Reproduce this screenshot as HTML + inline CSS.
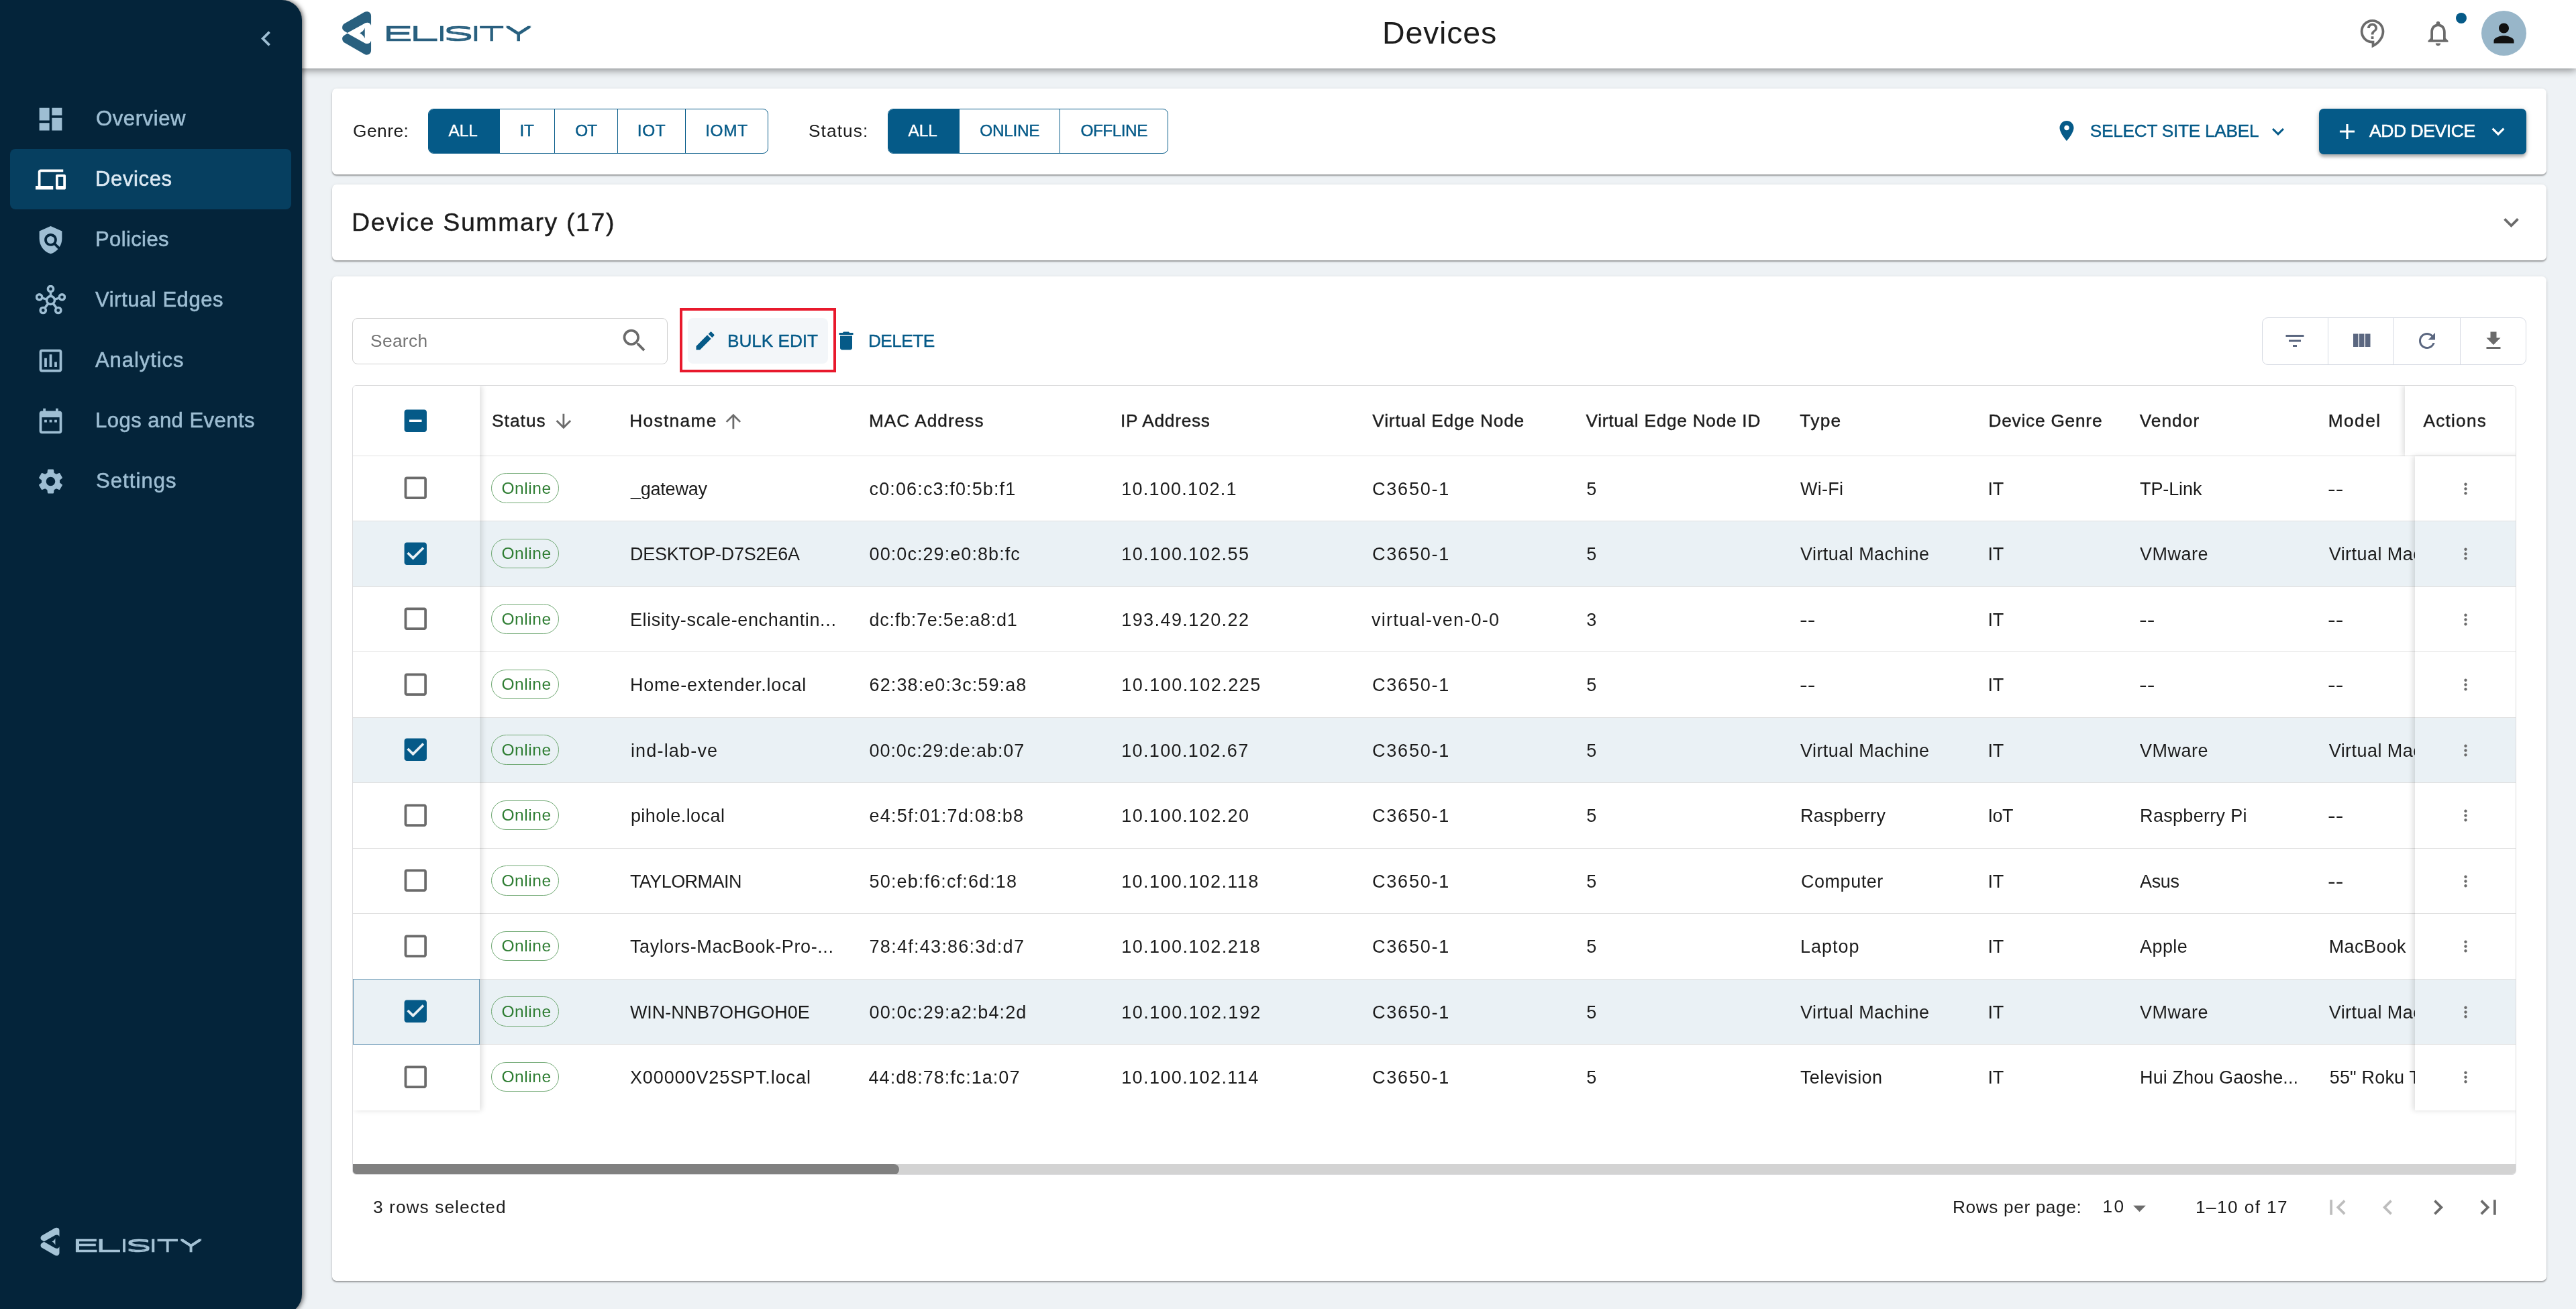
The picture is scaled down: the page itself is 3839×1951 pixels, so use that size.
<!DOCTYPE html>
<html lang="en"><head><meta charset="utf-8"><title>Devices</title>
<style>
*{box-sizing:border-box;margin:0;padding:0}
html,body{width:3839px;height:1951px;overflow:hidden}
body{will-change:transform;background:#eef2f5;font-family:"Liberation Sans",sans-serif;color:#1c1c1c;position:relative}
.ic{position:absolute;display:block}
.abs{position:absolute}
.t{position:absolute;white-space:nowrap;line-height:1}
.m{-webkit-text-stroke:0.42px currentColor}
.m2{-webkit-text-stroke:0.55px currentColor}
#hdr{position:absolute;left:0;top:0;width:3839px;height:102px;background:#fff;box-shadow:0 3px 11px rgba(0,0,0,.42)}
#side{position:absolute;left:0;top:0;width:450px;height:1959px;background:#04243a;border-radius:0 30px 30px 0;box-shadow:2px 0 7px rgba(0,0,0,.6)}
.nav{position:absolute;left:15px;width:419px;height:90px;border-radius:8px}
.nav.act{background:#063f60}
.card{position:absolute;left:495px;width:3300px;background:#fff;border-radius:6.5px;box-shadow:0 2px 2px rgba(0,0,0,.32),0 1px 5px rgba(0,0,0,.10)}
.tg{position:absolute;top:30px;height:67px;border:1.5px solid #055a88;border-radius:8px;overflow:hidden}
.tg>div{position:absolute;top:-1.5px;height:67px;display:flex;align-items:center;justify-content:center;font-size:26.25px;color:#055a88;border-left:1.5px solid #055a88;letter-spacing:.1px}
.tg>div:first-child{border-left:0;background:#055a88;color:#fff}
.lbl{font-size:26.25px;color:#1c1c1c}
.btn{font-size:26.25px;color:#055a88;letter-spacing:.4px}
#grid{position:absolute;left:30px;top:162px;width:3225px;height:1177px;border:1px solid #dadadc;border-radius:6px;overflow:hidden}
.row{position:absolute;left:0;width:3225px;height:97.5px;border-bottom:1px solid #e0e0e0}
.row.sel{background:#eaf1f5}
.c{position:absolute;top:0;height:96px;display:flex;align-items:center;font-size:27px;color:#1c1c1c;white-space:nowrap;letter-spacing:1px;overflow:hidden}
.h{position:absolute;top:0;height:104px;display:flex;align-items:center;font-size:26.25px;color:#1c1c1c;white-space:nowrap;letter-spacing:.8px}
.chip{position:absolute;width:101px;height:44.5px;border:1.5px solid #6fa872;border-radius:23px}
.pinL{position:absolute;left:0;top:0;width:189px;background:#fff;box-shadow:3px 0 8px rgba(0,0,0,.13)}
.pinR{position:absolute;top:0;background:#fff;box-shadow:-3px 0 8px rgba(0,0,0,.13)}
.pc{position:absolute;left:0;width:100%;height:97.5px;border-bottom:1px solid #e0e0e0}
.pc.sel{background:#eaf1f5}
</style></head><body>

<div id="hdr">
<svg class="ic" style="left:500px;top:10px;width:70.0px;height:80.0px" viewBox="0 0 1145 1309" fill="#29607f"><path d="M215 415L705 132C735 115 790 108 830 140C860 165 868 195 868 230L868 460C850 410 810 385 770 390C740 392 720 400 700 412L290 640L225 600C180 575 160 540 165 500C170 455 190 430 215 415Z"/><path d="M215 875 L705 1158 C735 1175 790 1182 830 1150 C860 1125 868 1095 868 1060 L868 830 C850 880 810 905 770 900 C740 898 720 890 700 878 L290 650 L225 690 C180 715 160 750 165 790 C170 835 190 860 215 875 Z"/><path d="M590 645C640 620 690 580 715 515L715 775C690 710 640 670 590 645Z"/></svg>
<svg class="ic" style="left:570px;top:30px;width:230px;height:40px" viewBox="0 0 230 40"><defs><filter id="vd1" x="-2%" y="-30%" width="104%" height="160%"><feMorphology operator="dilate" radius="0 1"/></filter></defs><g font-family="DejaVu Sans, Liberation Sans, sans-serif" font-weight="200" font-size="27" fill="#29607f" stroke="#29607f" stroke-width="0.6" filter="url(#vd1)"><text transform="translate(-3.10,29.700000000000003) scale(3.014,1)">E</text><text transform="translate(36.93,29.700000000000003) scale(3.073,1)">L</text><text transform="translate(79.00,29.700000000000003) scale(2.370,1)">I</text><text transform="translate(89.58,29.700000000000003) scale(2.806,1)">S</text><text transform="translate(129.68,29.700000000000003) scale(2.311,1)">I</text><text transform="translate(144.47,29.700000000000003) scale(2.204,1)">T</text><text transform="translate(183.62,29.700000000000003) scale(2.332,1)">Y</text></g></svg>
<div class="t" style="left:2060.00px;top:26px;font-size:46.5px;letter-spacing:0.811px;color:#1c1c1c;">Devices</div>
<svg class="ic" style="left:3514.0px;top:27.0px;width:45px;height:45px" viewBox="0 0 24 24" fill="#6b6b6b"><path d="M11 23.590v-3.600c-5.010-.260-9-4.420-9-9.490C2 5.260 6.260 1 11.500 1S21 5.260 21 10.500c0 4.950-3.440 9.930-8.570 12.400l-1.430.690zM11.500 3C7.360 3 4 6.360 4 10.500S7.360 18 11.500 18H13v2.300c3.640-2.300 6-6.080 6-9.800C19 6.360 15.640 3 11.500 3zm-1 11.500h2v2h-2zm2-1.500h-2c0-3.250 3-3 3-5 0-1.100-.900-2-2-2s-2 .900-2 2h-2c0-2.210 1.790-4 4-4s4 1.790 4 4c0 2.500-3 2.750-3 5z"/></svg>
<svg class="ic" style="left:3611.2px;top:27.0px;width:45px;height:45px" viewBox="0 0 24 24" fill="#6b6b6b"><path d="M12 22c1.1 0 2-.9 2-2h-4c0 1.1.9 2 2 2zm6-6v-5c0-3.070-1.630-5.640-4.500-6.320V4c0-.830-.670-1.500-1.500-1.500s-1.500.670-1.500 1.500v.680C7.640 5.360 6 7.920 6 11v5l-2 2v1h16v-1l-2-2zm-2 1H8v-6c0-2.480 1.510-4.500 4-4.500s4 2.020 4 4.500v6z"/></svg>
<div class="abs" style="left:3660px;top:19px;width:16px;height:16px;border-radius:50%;background:#055a88"></div>
<div class="abs" style="left:3698px;top:16px;width:67px;height:67px;border-radius:50%;background:#98b6c9"></div>
<svg class="ic" style="left:3709.0px;top:27.0px;width:45px;height:45px" viewBox="0 0 24 24" fill="#111"><path d="M12 12c2.210 0 4-1.790 4-4s-1.790-4-4-4-4 1.790-4 4 1.790 4 4 4zm0 2c-2.670 0-8 1.340-8 4v2h16v-2c0-2.660-5.330-4-8-4z"/></svg>
</div>
<div id="side">
<svg class="ic" style="left:373.5px;top:34.5px;width:45px;height:45px" viewBox="0 0 24 24" fill="#9ebed3"><path d="M15.41 7.41L14 6l-6 6 6 6 1.41-1.41L10.83 12z"/></svg>
<div class="nav" style="top:132px">
<svg class="ic" style="left:37.5px;top:22.5px;width:45px;height:45px" viewBox="0 0 24 24" fill="#9ebed3"><path d="M3 13h8V3H3v10zm0 8h8v-6H3v6zm10 0h8V11h-8v10zm0-18v6h8V3h-8z"/></svg>
<div class="t m2" style="left:128.00px;top:29.3px;font-size:31px;letter-spacing:0.599px;color:#9ebed3;">Overview</div>
</div>
<div class="nav act" style="top:222px">
<svg class="ic" style="left:37.5px;top:22.5px;width:45px;height:45px" viewBox="0 0 24 24" fill="#ffffff"><path d="M4 6h18V4H4c-1.1 0-2 .9-2 2v11H0v3h14v-3H4V6zm19 2h-6c-.55 0-1 .45-1 1v10c0 .55.45 1 1 1h6c.55 0 1-.45 1-1V9c0-.55-.45-1-1-1zm-1 9h-4v-7h4v7z"/></svg>
<div class="t m2" style="left:127.00px;top:29.3px;font-size:31px;letter-spacing:0.624px;color:#dbe9f3;">Devices</div>
</div>
<div class="nav" style="top:312px">
<svg class="ic" style="left:37.5px;top:22.5px;width:45px;height:45px" viewBox="0 0 24 24" fill="#9ebed3"><path d="M21 5l-9-4-9 4v6c0 5.55 3.84 10.74 9 12 2.3-.56 4.33-1.9 5.88-3.71l-3.12-3.12c-1.94 1.29-4.58 1.07-6.29-.64-1.95-1.95-1.95-5.12 0-7.07 1.95-1.95 5.12-1.95 7.07 0 1.71 1.71 1.92 4.35.64 6.29l2.9 2.9C20.29 15.69 21 13.38 21 11V5z"/><circle cx="12" cy="12" r="3"/></svg>
<div class="t m2" style="left:127.00px;top:29.3px;font-size:31px;letter-spacing:0.383px;color:#9ebed3;">Policies</div>
</div>
<div class="nav" style="top:402px">
<svg class="ic" style="left:37.5px;top:22.5px;width:45px;height:45px" viewBox="0 0 24 24" fill="none" stroke="#9ebed3" stroke-width="1.85"><circle cx="12" cy="12" r="3.2"/><circle cx="12" cy="3" r="2.2"/><circle cx="3" cy="9.5" r="2.2"/><circle cx="21" cy="9.5" r="2.2"/><circle cx="6" cy="20" r="2.2"/><circle cx="18" cy="20" r="2.2"/><path d="M12 5.2V8.8M5.1 10.2L8.9 11.3M18.9 10.2L15.1 11.3M7.3 18.2L10 14.6M16.7 18.2L14 14.6"/></svg>
<div class="t m2" style="left:127.00px;top:29.3px;font-size:31px;letter-spacing:0.557px;color:#9ebed3;">Virtual Edges</div>
</div>
<div class="nav" style="top:492px">
<svg class="ic" style="left:37.5px;top:22.5px;width:45px;height:45px" viewBox="0 0 24 24" fill="#9ebed3"><path d="M19 3H5c-1.1 0-2 .9-2 2v14c0 1.1.9 2 2 2h14c1.1 0 2-.9 2-2V5c0-1.1-.9-2-2-2zm0 16H5V5h14v14zM7 10h2v7H7zm4-3h2v10h-2zm4 6h2v4h-2z"/></svg>
<div class="t m2" style="left:127.00px;top:29.3px;font-size:31px;letter-spacing:0.932px;color:#9ebed3;">Analytics</div>
</div>
<div class="nav" style="top:582px">
<svg class="ic" style="left:37.5px;top:22.5px;width:45px;height:45px" viewBox="0 0 24 24" fill="#9ebed3"><path d="M9 11H7v2h2v-2zm4 0h-2v2h2v-2zm4 0h-2v2h2v-2zm2-7h-1V2h-2v2H8V2H6v2H5c-1.11 0-1.99.9-1.99 2L3 20c0 1.1.89 2 2 2h14c1.1 0 2-.9 2-2V6c0-1.1-.9-2-2-2zm0 16H5V9h14v11z"/></svg>
<div class="t m2" style="left:127.00px;top:29.3px;font-size:31px;letter-spacing:0.469px;color:#9ebed3;">Logs and Events</div>
</div>
<div class="nav" style="top:672px">
<svg class="ic" style="left:37.5px;top:22.5px;width:45px;height:45px" viewBox="0 0 24 24" fill="#9ebed3"><path d="M19.14 12.94c.04-.3.06-.61.06-.94 0-.32-.02-.64-.07-.94l2.03-1.58c.18-.14.23-.41.12-.61l-1.92-3.32c-.12-.22-.37-.29-.59-.22l-2.39.96c-.5-.38-1.03-.7-1.62-.94l-.36-2.54c-.04-.24-.24-.41-.48-.41h-3.84c-.24 0-.43.17-.47.41l-.36 2.54c-.59.24-1.13.57-1.62.94l-2.39-.96c-.22-.08-.47 0-.59.22L2.74 8.87c-.12.21-.08.47.12.61l2.03 1.58c-.05.3-.09.63-.09.94s.02.64.07.94l-2.03 1.58c-.18.14-.23.41-.12.61l1.92 3.32c.12.22.37.29.59.22l2.39-.96c.5.38 1.03.7 1.62.94l.36 2.54c.05.24.24.41.48.41h3.84c.24 0 .44-.17.47-.41l.36-2.54c.59-.24 1.13-.56 1.62-.94l2.39.96c.22.08.47 0 .59-.22l1.92-3.32c.12-.22.07-.47-.12-.61l-2.01-1.58zM12 15.6c-1.98 0-3.6-1.62-3.6-3.6s1.62-3.6 3.6-3.6 3.6 1.62 3.6 3.6-1.62 3.6-3.6 3.6z"/></svg>
<div class="t m2" style="left:128.00px;top:29.3px;font-size:31px;letter-spacing:1.070px;color:#9ebed3;">Settings</div>
</div>
<svg class="ic" style="left:53.5px;top:1824.5px;width:45.5px;height:52.0px" viewBox="0 0 1145 1309" fill="#a5c3d6"><path d="M215 415L705 132C735 115 790 108 830 140C860 165 868 195 868 230L868 460C850 410 810 385 770 390C740 392 720 400 700 412L290 640L225 600C180 575 160 540 165 500C170 455 190 430 215 415Z"/><path d="M215 875 L705 1158 C735 1175 790 1182 830 1150 C860 1125 868 1095 868 1060 L868 830 C850 880 810 905 770 900 C740 898 720 890 700 878 L290 650 L225 690 C180 715 160 750 165 790 C170 835 190 860 215 875 Z"/><path d="M590 645C640 620 690 580 715 515L715 775C690 710 640 670 590 645Z"/></svg>
<svg class="ic" style="left:105px;top:1836px;width:210px;height:40px" viewBox="0 0 210 40"><defs><filter id="vd2" x="-2%" y="-30%" width="104%" height="160%"><feMorphology operator="dilate" radius="0 1"/></filter></defs><g font-family="DejaVu Sans, Liberation Sans, sans-serif" font-weight="200" font-size="22.9" fill="#a5c3d6" stroke="#a5c3d6" stroke-width="0.5" filter="url(#vd2)"><text transform="translate(0.10,28.700000000000045) scale(3.114,1)">E</text><text transform="translate(34.46,28.700000000000045) scale(3.209,1)">L</text><text transform="translate(72.77,28.700000000000045) scale(2.166,1)">I</text><text transform="translate(81.40,28.700000000000045) scale(2.795,1)">S</text><text transform="translate(115.35,28.700000000000045) scale(2.376,1)">I</text><text transform="translate(128.99,28.700000000000045) scale(2.251,1)">T</text><text transform="translate(163.26,28.700000000000045) scale(2.334,1)">Y</text></g></svg>
</div>
<div class="card" style="top:132px;height:127.5px">
<div class="t" style="left:31.00px;top:50px;font-size:26.25px;letter-spacing:0.509px;color:#1c1c1c;">Genre:</div>
<div class="tg" style="left:143px;width:506.5px"><div style="left:-1.5px;width:106.79999999999995px"><div class="t m" style="left:31.05px;top:0.7px;font-size:24.4px;letter-spacing:-0.067px;color:#fff;line-height:66px;">ALL</div></div><div style="left:105.29999999999995px;width:81.5px"><div class="t m" style="left:29.25px;top:0.7px;font-size:24.4px;letter-spacing:-0.277px;color:#055a88;line-height:66px;">IT</div></div><div style="left:186.79999999999995px;width:94.40000000000009px"><div class="t m" style="left:30.55px;top:0.7px;font-size:24.4px;letter-spacing:-1.172px;color:#055a88;line-height:66px;">OT</div></div><div style="left:281.20000000000005px;width:100.69999999999993px"><div class="t m" style="left:28.60px;top:0.7px;font-size:24.4px;letter-spacing:0.626px;color:#055a88;line-height:66px;">IOT</div></div><div style="left:381.9px;width:123.10000000000002px"><div class="t m" style="left:29.30px;top:0.7px;font-size:24.4px;letter-spacing:0.645px;color:#055a88;line-height:66px;">IOMT</div></div></div>
<div class="t" style="left:710.00px;top:50px;font-size:26.25px;letter-spacing:1.097px;color:#1c1c1c;">Status:</div>
<div class="tg" style="left:828px;width:417.70000000000005px"><div style="left:-1.5px;width:106.70000000000005px"><div class="t m" style="left:31.00px;top:0.7px;font-size:24.4px;letter-spacing:-0.067px;color:#fff;line-height:66px;">ALL</div></div><div style="left:105.20000000000005px;width:149.70000000000005px"><div class="t m" style="left:30.10px;top:0.7px;font-size:24.4px;letter-spacing:-0.308px;color:#055a88;line-height:66px;">ONLINE</div></div><div style="left:254.9000000000001px;width:161.29999999999995px"><div class="t m" style="left:30.50px;top:0.7px;font-size:24.4px;letter-spacing:-0.487px;color:#055a88;line-height:66px;">OFFLINE</div></div></div>
<svg class="ic" style="left:2566.5px;top:45.0px;width:36px;height:36px" viewBox="0 0 24 24" fill="#055a88"><path d="M12 2C8.13 2 5 5.13 5 9c0 5.25 7 13 7 13s7-7.75 7-13c0-3.870-3.130-7-7-7zm0 9.500c-1.380 0-2.500-1.120-2.500-2.500s1.120-2.500 2.500-2.500 2.500 1.120 2.500 2.500-1.120 2.500-2.500 2.500z"/></svg>
<div class="t m" style="left:2619.70px;top:50px;font-size:26.25px;letter-spacing:-0.273px;color:#055a88;">SELECT SITE LABEL</div>
<svg class="ic" style="left:2881.5px;top:46.0px;width:36px;height:36px" viewBox="0 0 24 24" fill="#055a88"><path d="M16.59 8.59L12 13.17 7.41 8.59 6 10l6 6 6-6z"/></svg>
<div class="abs" style="left:2960.7px;top:30px;width:309.3px;height:67.5px;border-radius:7px;background:#055a88;box-shadow:0 4px 4px rgba(0,0,0,.25),0 1px 8px rgba(0,0,0,.14)"></div>
<svg class="ic" style="left:2983.5px;top:44.5px;width:38px;height:38px" viewBox="0 0 24 24" fill="#fff"><path d="M19 13h-6v6h-2v-6H5v-2h6V5h2v6h6v2z"/></svg>
<div class="t m2" style="left:3036.00px;top:50px;font-size:26.5px;letter-spacing:-0.422px;color:#fff;">ADD DEVICE</div>
<svg class="ic" style="left:3209.0px;top:45.0px;width:38px;height:38px" viewBox="0 0 24 24" fill="#fff"><path d="M16.59 8.59L12 13.17 7.41 8.59 6 10l6 6 6-6z"/></svg>
</div>
<div class="card" style="top:275px;height:113px">
<div class="t m" style="left:29.00px;top:38px;font-size:37.5px;letter-spacing:1.606px;color:#1c1c1c;">Device Summary (17)</div>
<svg class="ic" style="left:3224.5px;top:34.0px;width:45px;height:45px" viewBox="0 0 24 24" fill="#6b6b6b"><path d="M16.59 8.59L12 13.17 7.41 8.59 6 10l6 6 6-6z"/></svg>
</div>
<div class="card" style="top:412px;height:1497px">
<div class="abs" style="left:30px;top:62px;width:470px;height:68.5px;border:1.5px solid #cfcfcf;border-radius:8px"></div>
<div class="t" style="left:57.00px;top:83px;font-size:26.25px;letter-spacing:0.385px;color:#757575;">Search</div>
<svg class="ic" style="left:427.5px;top:72.5px;width:45px;height:45px" viewBox="0 0 24 24" fill="#6b6b6b"><path d="M15.5 14h-.79l-.28-.27C15.41 12.59 16 11.11 16 9.5 16 5.91 13.09 3 9.5 3S3 5.91 3 9.5 5.91 16 9.5 16c1.61 0 3.09-.59 4.23-1.57l.27.28v.79l5 4.99L20.49 19l-4.99-5zm-6 0C7.01 14 5 11.99 5 9.5S7.01 5 9.5 5 14 7.01 14 9.5 11.99 14 9.5 14z"/></svg>
<div class="abs" style="left:518px;top:47px;width:233px;height:96px;border:4.5px solid #e8192c"></div>
<div class="abs" style="left:530px;top:62px;width:209px;height:67.5px;border-radius:8px;background:#f3f6f9"></div>
<svg class="ic" style="left:537.5px;top:78.0px;width:36px;height:36px" viewBox="0 0 24 24" fill="#055a88"><path d="M3 17.25V21h3.75L17.81 9.94l-3.75-3.75L3 17.25zM20.71 7.04c.39-.39.39-1.02 0-1.41l-2.34-2.34c-.39-.39-1.02-.39-1.41 0l-1.83 1.83 3.75 3.75 1.83-1.83z"/></svg>
<div class="t m" style="left:589.00px;top:83px;font-size:26.25px;letter-spacing:-0.078px;color:#055a88;">BULK EDIT</div>
<svg class="ic" style="left:748.0px;top:78.0px;width:36px;height:36px" viewBox="0 0 24 24" fill="#055a88"><path d="M6 19c0 1.1.9 2 2 2h8c1.1 0 2-.9 2-2V7H6v12zM19 4h-3.5l-1-1h-5l-1 1H5v2h14V4z"/></svg>
<div class="t m" style="left:799.00px;top:83px;font-size:26.25px;letter-spacing:-0.582px;color:#055a88;">DELETE</div>
<div class="abs" style="left:2875.5px;top:60.5px;width:394.5px;height:71px;border:1.5px solid #d5d9e2;border-radius:9px"></div>
<div class="abs" style="left:2973.75px;top:60.5px;width:1.5px;height:71px;background:#d5d9e2"></div>
<div class="abs" style="left:3071.75px;top:60.5px;width:1.5px;height:71px;background:#d5d9e2"></div>
<div class="abs" style="left:3170.75px;top:60.5px;width:1.5px;height:71px;background:#d5d9e2"></div>
<svg class="ic" style="left:2907.0px;top:78.0px;width:36px;height:36px" viewBox="0 0 24 24" fill="#5b6780"><path d="M10 18h4v-2h-4v2zM3 6v2h18V6H3zm3 7h12v-2H6v2z"/></svg>
<svg class="ic" style="left:3005.5px;top:78.0px;width:36px;height:36px" viewBox="0 0 24 24" fill="#5b6780"><path d="M10 18h5V5h-5v13zm-6 0h5V5H4v13zM16 5v13h5V5h-5z"/></svg>
<svg class="ic" style="left:3104.0px;top:78.0px;width:36px;height:36px" viewBox="0 0 24 24" fill="#5b6780"><path d="M17.65 6.35C16.2 4.9 14.21 4 12 4c-4.42 0-7.99 3.58-7.99 8s3.57 8 7.99 8c3.73 0 6.84-2.55 7.73-6h-2.08c-.82 2.33-3.04 4-5.65 4-3.31 0-6-2.69-6-6s2.69-6 6-6c1.66 0 3.14.69 4.22 1.78L13 11h7V4l-2.35 2.35z"/></svg>
<svg class="ic" style="left:3202.5px;top:78.0px;width:36px;height:36px" viewBox="0 0 24 24" fill="#6b6b6b"><path d="M19 9h-4V3H9v6H5l7 7 7-7zM5 18v2h14v-2H5z"/></svg>
<div id="grid">
<div class="row" style="top:0;height:105px">
<div class="t m" style="left:207.00px;top:0px;font-size:26.25px;letter-spacing:1.061px;color:#1c1c1c;line-height:105px;">Status</div>
<div class="t m" style="left:412.20px;top:0px;font-size:26.25px;letter-spacing:1.352px;color:#1c1c1c;line-height:105px;">Hostname</div>
<div class="t m" style="left:768.90px;top:0px;font-size:26.25px;letter-spacing:1.020px;color:#1c1c1c;line-height:105px;">MAC Address</div>
<div class="t m" style="left:1143.90px;top:0px;font-size:26.25px;letter-spacing:0.737px;color:#1c1c1c;line-height:105px;">IP Address</div>
<div class="t m" style="left:1519.30px;top:0px;font-size:26.25px;letter-spacing:0.833px;color:#1c1c1c;line-height:105px;">Virtual Edge Node</div>
<div class="t m" style="left:1837.40px;top:0px;font-size:26.25px;letter-spacing:0.728px;color:#1c1c1c;line-height:105px;">Virtual Edge Node ID</div>
<div class="t m" style="left:2156.30px;top:0px;font-size:26.25px;letter-spacing:1.330px;color:#1c1c1c;line-height:105px;">Type</div>
<div class="t m" style="left:2437.40px;top:0px;font-size:26.25px;letter-spacing:0.783px;color:#1c1c1c;line-height:105px;">Device Genre</div>
<div class="t m" style="left:2662.70px;top:0px;font-size:26.25px;letter-spacing:1.049px;color:#1c1c1c;line-height:105px;">Vendor</div>
<div class="t m" style="left:2943.70px;top:0px;font-size:26.25px;letter-spacing:1.459px;color:#1c1c1c;line-height:105px;">Model</div>
</div>
<svg class="ic" style="left:296.6px;top:35.6px;width:33.75px;height:33.75px" viewBox="0 0 24 24" fill="#6b6b6b"><path d="M20 12l-1.41-1.41L13 16.17V4h-2v12.17l-5.58-5.59L4 12l8 8 8-8z"/></svg>
<svg class="ic" style="left:550.1px;top:35.6px;width:33.75px;height:33.75px" viewBox="0 0 24 24" fill="#6b6b6b"><path d="M4 12l1.41 1.41L11 7.83V20h2V7.83l5.58 5.59L20 12l-8-8-8 8z"/></svg>
<div class="row" style="top:105px;height:97px">
<div class="chip" style="left:206.39999999999998px;top:25.25px"><div class="t" style="left:14.00px;top:0.5px;font-size:24.5px;letter-spacing:0.561px;color:#2e7d32;line-height:42px;">Online</div></div>
<div class="t" style="left:413.90px;top:1px;font-size:27px;letter-spacing:-0.212px;color:#1c1c1c;line-height:97.5px;">_gateway</div>
<div class="t" style="left:769.60px;top:1px;font-size:27px;letter-spacing:1.124px;color:#1c1c1c;line-height:97.5px;">c0:06:c3:f0:5b:f1</div>
<div class="t" style="left:1145.20px;top:1px;font-size:27px;letter-spacing:1.252px;color:#1c1c1c;line-height:97.5px;">10.100.102.1</div>
<div class="t" style="left:1519.00px;top:1px;font-size:27px;letter-spacing:1.791px;color:#1c1c1c;line-height:97.5px;">C3650-1</div>
<div class="t" style="left:1838.30px;top:1px;font-size:27px;letter-spacing:0.000px;color:#1c1c1c;line-height:97.5px;">5</div>
<div class="t" style="left:2157.00px;top:1px;font-size:27px;letter-spacing:0.233px;color:#1c1c1c;line-height:97.5px;">Wi-Fi</div>
<div class="t" style="left:2436.40px;top:1px;font-size:27px;letter-spacing:-0.201px;color:#1c1c1c;line-height:97.5px;">IT</div>
<div class="t" style="left:2663.10px;top:1px;font-size:27px;letter-spacing:-0.121px;color:#1c1c1c;line-height:97.5px;">TP-Link</div>
<div class="t" style="left:2943.40px;top:1px;font-size:27px;letter-spacing:0.000px;color:#1c1c1c;line-height:97.5px;transform:scaleX(1.3);transform-origin:left;">--</div>
</div>
<div class="row sel" style="top:202px;height:98px">
<div class="chip" style="left:206.39999999999998px;top:25.75px"><div class="t" style="left:14.00px;top:0.5px;font-size:24.5px;letter-spacing:0.561px;color:#2e7d32;line-height:42px;">Online</div></div>
<div class="t" style="left:412.90px;top:1px;font-size:27px;letter-spacing:-0.214px;color:#1c1c1c;line-height:97.5px;">DESKTOP-D7S2E6A</div>
<div class="t" style="left:769.60px;top:1px;font-size:27px;letter-spacing:1.065px;color:#1c1c1c;line-height:97.5px;">00:0c:29:e0:8b:fc</div>
<div class="t" style="left:1145.20px;top:1px;font-size:27px;letter-spacing:1.429px;color:#1c1c1c;line-height:97.5px;">10.100.102.55</div>
<div class="t" style="left:1519.00px;top:1px;font-size:27px;letter-spacing:1.791px;color:#1c1c1c;line-height:97.5px;">C3650-1</div>
<div class="t" style="left:1838.30px;top:1px;font-size:27px;letter-spacing:0.000px;color:#1c1c1c;line-height:97.5px;">5</div>
<div class="t" style="left:2157.00px;top:1px;font-size:27px;letter-spacing:0.451px;color:#1c1c1c;line-height:97.5px;">Virtual Machine</div>
<div class="t" style="left:2436.40px;top:1px;font-size:27px;letter-spacing:-0.201px;color:#1c1c1c;line-height:97.5px;">IT</div>
<div class="t" style="left:2663.10px;top:1px;font-size:27px;letter-spacing:0.459px;color:#1c1c1c;line-height:97.5px;">VMware</div>
<div class="t" style="left:2944.70px;top:1px;font-size:27px;letter-spacing:0.451px;color:#1c1c1c;line-height:97.5px;">Virtual Machine</div>
</div>
<div class="row" style="top:300px;height:97px">
<div class="chip" style="left:206.39999999999998px;top:25.25px"><div class="t" style="left:14.00px;top:0.5px;font-size:24.5px;letter-spacing:0.561px;color:#2e7d32;line-height:42px;">Online</div></div>
<div class="t" style="left:412.90px;top:1px;font-size:27px;letter-spacing:0.635px;color:#1c1c1c;line-height:97.5px;">Elisity-scale-enchantin...</div>
<div class="t" style="left:769.60px;top:1px;font-size:27px;letter-spacing:0.722px;color:#1c1c1c;line-height:97.5px;">dc:fb:7e:5e:a8:d1</div>
<div class="t" style="left:1145.20px;top:1px;font-size:27px;letter-spacing:1.429px;color:#1c1c1c;line-height:97.5px;">193.49.120.22</div>
<div class="t" style="left:1518.00px;top:1px;font-size:27px;letter-spacing:1.247px;color:#1c1c1c;line-height:97.5px;">virtual-ven-0-0</div>
<div class="t" style="left:1838.30px;top:1px;font-size:27px;letter-spacing:0.000px;color:#1c1c1c;line-height:97.5px;">3</div>
<div class="t" style="left:2155.70px;top:1px;font-size:27px;letter-spacing:0.000px;color:#1c1c1c;line-height:97.5px;transform:scaleX(1.3);transform-origin:left;">--</div>
<div class="t" style="left:2436.40px;top:1px;font-size:27px;letter-spacing:-0.201px;color:#1c1c1c;line-height:97.5px;">IT</div>
<div class="t" style="left:2661.80px;top:1px;font-size:27px;letter-spacing:0.000px;color:#1c1c1c;line-height:97.5px;transform:scaleX(1.3);transform-origin:left;">--</div>
<div class="t" style="left:2943.40px;top:1px;font-size:27px;letter-spacing:0.000px;color:#1c1c1c;line-height:97.5px;transform:scaleX(1.3);transform-origin:left;">--</div>
</div>
<div class="row" style="top:397px;height:98px">
<div class="chip" style="left:206.39999999999998px;top:25.75px"><div class="t" style="left:14.00px;top:0.5px;font-size:24.5px;letter-spacing:0.561px;color:#2e7d32;line-height:42px;">Online</div></div>
<div class="t" style="left:412.90px;top:1px;font-size:27px;letter-spacing:0.821px;color:#1c1c1c;line-height:97.5px;">Home-extender.local</div>
<div class="t" style="left:769.60px;top:1px;font-size:27px;letter-spacing:1.096px;color:#1c1c1c;line-height:97.5px;">62:38:e0:3c:59:a8</div>
<div class="t" style="left:1145.20px;top:1px;font-size:27px;letter-spacing:1.487px;color:#1c1c1c;line-height:97.5px;">10.100.102.225</div>
<div class="t" style="left:1519.00px;top:1px;font-size:27px;letter-spacing:1.791px;color:#1c1c1c;line-height:97.5px;">C3650-1</div>
<div class="t" style="left:1838.30px;top:1px;font-size:27px;letter-spacing:0.000px;color:#1c1c1c;line-height:97.5px;">5</div>
<div class="t" style="left:2155.70px;top:1px;font-size:27px;letter-spacing:0.000px;color:#1c1c1c;line-height:97.5px;transform:scaleX(1.3);transform-origin:left;">--</div>
<div class="t" style="left:2436.40px;top:1px;font-size:27px;letter-spacing:-0.201px;color:#1c1c1c;line-height:97.5px;">IT</div>
<div class="t" style="left:2661.80px;top:1px;font-size:27px;letter-spacing:0.000px;color:#1c1c1c;line-height:97.5px;transform:scaleX(1.3);transform-origin:left;">--</div>
<div class="t" style="left:2943.40px;top:1px;font-size:27px;letter-spacing:0.000px;color:#1c1c1c;line-height:97.5px;transform:scaleX(1.3);transform-origin:left;">--</div>
</div>
<div class="row sel" style="top:495px;height:97px">
<div class="chip" style="left:206.39999999999998px;top:25.25px"><div class="t" style="left:14.00px;top:0.5px;font-size:24.5px;letter-spacing:0.561px;color:#2e7d32;line-height:42px;">Online</div></div>
<div class="t" style="left:413.90px;top:1px;font-size:27px;letter-spacing:1.184px;color:#1c1c1c;line-height:97.5px;">ind-lab-ve</div>
<div class="t" style="left:769.60px;top:1px;font-size:27px;letter-spacing:0.908px;color:#1c1c1c;line-height:97.5px;">00:0c:29:de:ab:07</div>
<div class="t" style="left:1145.20px;top:1px;font-size:27px;letter-spacing:1.363px;color:#1c1c1c;line-height:97.5px;">10.100.102.67</div>
<div class="t" style="left:1519.00px;top:1px;font-size:27px;letter-spacing:1.791px;color:#1c1c1c;line-height:97.5px;">C3650-1</div>
<div class="t" style="left:1838.30px;top:1px;font-size:27px;letter-spacing:0.000px;color:#1c1c1c;line-height:97.5px;">5</div>
<div class="t" style="left:2157.00px;top:1px;font-size:27px;letter-spacing:0.451px;color:#1c1c1c;line-height:97.5px;">Virtual Machine</div>
<div class="t" style="left:2436.40px;top:1px;font-size:27px;letter-spacing:-0.201px;color:#1c1c1c;line-height:97.5px;">IT</div>
<div class="t" style="left:2663.10px;top:1px;font-size:27px;letter-spacing:0.459px;color:#1c1c1c;line-height:97.5px;">VMware</div>
<div class="t" style="left:2944.70px;top:1px;font-size:27px;letter-spacing:0.451px;color:#1c1c1c;line-height:97.5px;">Virtual Machine</div>
</div>
<div class="row" style="top:592px;height:98px">
<div class="chip" style="left:206.39999999999998px;top:25.75px"><div class="t" style="left:14.00px;top:0.5px;font-size:24.5px;letter-spacing:0.561px;color:#2e7d32;line-height:42px;">Online</div></div>
<div class="t" style="left:413.90px;top:1px;font-size:27px;letter-spacing:0.455px;color:#1c1c1c;line-height:97.5px;">pihole.local</div>
<div class="t" style="left:769.60px;top:1px;font-size:27px;letter-spacing:1.208px;color:#1c1c1c;line-height:97.5px;">e4:5f:01:7d:08:b8</div>
<div class="t" style="left:1145.20px;top:1px;font-size:27px;letter-spacing:1.429px;color:#1c1c1c;line-height:97.5px;">10.100.102.20</div>
<div class="t" style="left:1519.00px;top:1px;font-size:27px;letter-spacing:1.791px;color:#1c1c1c;line-height:97.5px;">C3650-1</div>
<div class="t" style="left:1838.30px;top:1px;font-size:27px;letter-spacing:0.000px;color:#1c1c1c;line-height:97.5px;">5</div>
<div class="t" style="left:2157.00px;top:1px;font-size:27px;letter-spacing:0.294px;color:#1c1c1c;line-height:97.5px;">Raspberry</div>
<div class="t" style="left:2436.40px;top:1px;font-size:27px;letter-spacing:-0.459px;color:#1c1c1c;line-height:97.5px;">IoT</div>
<div class="t" style="left:2663.10px;top:1px;font-size:27px;letter-spacing:0.304px;color:#1c1c1c;line-height:97.5px;">Raspberry Pi</div>
<div class="t" style="left:2943.40px;top:1px;font-size:27px;letter-spacing:0.000px;color:#1c1c1c;line-height:97.5px;transform:scaleX(1.3);transform-origin:left;">--</div>
</div>
<div class="row" style="top:690px;height:97px">
<div class="chip" style="left:206.39999999999998px;top:25.25px"><div class="t" style="left:14.00px;top:0.5px;font-size:24.5px;letter-spacing:0.561px;color:#2e7d32;line-height:42px;">Online</div></div>
<div class="t" style="left:412.90px;top:1px;font-size:27px;letter-spacing:-0.558px;color:#1c1c1c;line-height:97.5px;">TAYLORMAIN</div>
<div class="t" style="left:769.60px;top:1px;font-size:27px;letter-spacing:1.141px;color:#1c1c1c;line-height:97.5px;">50:eb:f6:cf:6d:18</div>
<div class="t" style="left:1145.20px;top:1px;font-size:27px;letter-spacing:1.411px;color:#1c1c1c;line-height:97.5px;">10.100.102.118</div>
<div class="t" style="left:1519.00px;top:1px;font-size:27px;letter-spacing:1.791px;color:#1c1c1c;line-height:97.5px;">C3650-1</div>
<div class="t" style="left:1838.30px;top:1px;font-size:27px;letter-spacing:0.000px;color:#1c1c1c;line-height:97.5px;">5</div>
<div class="t" style="left:2158.00px;top:1px;font-size:27px;letter-spacing:0.535px;color:#1c1c1c;line-height:97.5px;">Computer</div>
<div class="t" style="left:2436.40px;top:1px;font-size:27px;letter-spacing:-0.201px;color:#1c1c1c;line-height:97.5px;">IT</div>
<div class="t" style="left:2663.10px;top:1px;font-size:27px;letter-spacing:-0.375px;color:#1c1c1c;line-height:97.5px;">Asus</div>
<div class="t" style="left:2943.40px;top:1px;font-size:27px;letter-spacing:0.000px;color:#1c1c1c;line-height:97.5px;transform:scaleX(1.3);transform-origin:left;">--</div>
</div>
<div class="row" style="top:787px;height:98px">
<div class="chip" style="left:206.39999999999998px;top:25.75px"><div class="t" style="left:14.00px;top:0.5px;font-size:24.5px;letter-spacing:0.561px;color:#2e7d32;line-height:42px;">Online</div></div>
<div class="t" style="left:412.90px;top:1px;font-size:27px;letter-spacing:0.615px;color:#1c1c1c;line-height:97.5px;">Taylors-MacBook-Pro-...</div>
<div class="t" style="left:769.60px;top:1px;font-size:27px;letter-spacing:1.258px;color:#1c1c1c;line-height:97.5px;">78:4f:43:86:3d:d7</div>
<div class="t" style="left:1145.20px;top:1px;font-size:27px;letter-spacing:1.449px;color:#1c1c1c;line-height:97.5px;">10.100.102.218</div>
<div class="t" style="left:1519.00px;top:1px;font-size:27px;letter-spacing:1.791px;color:#1c1c1c;line-height:97.5px;">C3650-1</div>
<div class="t" style="left:1838.30px;top:1px;font-size:27px;letter-spacing:0.000px;color:#1c1c1c;line-height:97.5px;">5</div>
<div class="t" style="left:2157.00px;top:1px;font-size:27px;letter-spacing:1.007px;color:#1c1c1c;line-height:97.5px;">Laptop</div>
<div class="t" style="left:2436.40px;top:1px;font-size:27px;letter-spacing:-0.201px;color:#1c1c1c;line-height:97.5px;">IT</div>
<div class="t" style="left:2663.10px;top:1px;font-size:27px;letter-spacing:0.390px;color:#1c1c1c;line-height:97.5px;">Apple</div>
<div class="t" style="left:2944.70px;top:1px;font-size:27px;letter-spacing:0.392px;color:#1c1c1c;line-height:97.5px;">MacBook</div>
</div>
<div class="row sel" style="top:885px;height:97px">
<div class="chip" style="left:206.39999999999998px;top:25.25px"><div class="t" style="left:14.00px;top:0.5px;font-size:24.5px;letter-spacing:0.561px;color:#2e7d32;line-height:42px;">Online</div></div>
<div class="t" style="left:412.90px;top:1px;font-size:27px;letter-spacing:-0.051px;color:#1c1c1c;line-height:97.5px;">WIN-NNB7OHGOH0E</div>
<div class="t" style="left:769.60px;top:1px;font-size:27px;letter-spacing:1.096px;color:#1c1c1c;line-height:97.5px;">00:0c:29:a2:b4:2d</div>
<div class="t" style="left:1145.20px;top:1px;font-size:27px;letter-spacing:1.487px;color:#1c1c1c;line-height:97.5px;">10.100.102.192</div>
<div class="t" style="left:1519.00px;top:1px;font-size:27px;letter-spacing:1.791px;color:#1c1c1c;line-height:97.5px;">C3650-1</div>
<div class="t" style="left:1838.30px;top:1px;font-size:27px;letter-spacing:0.000px;color:#1c1c1c;line-height:97.5px;">5</div>
<div class="t" style="left:2157.00px;top:1px;font-size:27px;letter-spacing:0.451px;color:#1c1c1c;line-height:97.5px;">Virtual Machine</div>
<div class="t" style="left:2436.40px;top:1px;font-size:27px;letter-spacing:-0.201px;color:#1c1c1c;line-height:97.5px;">IT</div>
<div class="t" style="left:2663.10px;top:1px;font-size:27px;letter-spacing:0.459px;color:#1c1c1c;line-height:97.5px;">VMware</div>
<div class="t" style="left:2944.70px;top:1px;font-size:27px;letter-spacing:0.451px;color:#1c1c1c;line-height:97.5px;">Virtual Machine</div>
</div>
<div class="row" style="top:982px;height:98px;border-bottom-color:transparent">
<div class="chip" style="left:206.39999999999998px;top:25.75px"><div class="t" style="left:14.00px;top:0.5px;font-size:24.5px;letter-spacing:0.561px;color:#2e7d32;line-height:42px;">Online</div></div>
<div class="t" style="left:412.90px;top:1px;font-size:27px;letter-spacing:0.901px;color:#1c1c1c;line-height:97.5px;">X00000V25SPT.local</div>
<div class="t" style="left:768.60px;top:1px;font-size:27px;letter-spacing:1.009px;color:#1c1c1c;line-height:97.5px;">44:d8:78:fc:1a:07</div>
<div class="t" style="left:1145.20px;top:1px;font-size:27px;letter-spacing:1.411px;color:#1c1c1c;line-height:97.5px;">10.100.102.114</div>
<div class="t" style="left:1519.00px;top:1px;font-size:27px;letter-spacing:1.791px;color:#1c1c1c;line-height:97.5px;">C3650-1</div>
<div class="t" style="left:1838.30px;top:1px;font-size:27px;letter-spacing:0.000px;color:#1c1c1c;line-height:97.5px;">5</div>
<div class="t" style="left:2157.00px;top:1px;font-size:27px;letter-spacing:0.373px;color:#1c1c1c;line-height:97.5px;">Television</div>
<div class="t" style="left:2436.40px;top:1px;font-size:27px;letter-spacing:-0.201px;color:#1c1c1c;line-height:97.5px;">IT</div>
<div class="t" style="left:2663.10px;top:1px;font-size:27px;letter-spacing:0.104px;color:#1c1c1c;line-height:97.5px;">Hui Zhou Gaoshe...</div>
<div class="t" style="left:2945.70px;top:1px;font-size:27px;letter-spacing:0.186px;color:#1c1c1c;line-height:97.5px;">55" Roku TV</div>
</div>
<div class="pinL" style="height:1080.0px">
<div class="pc" style="top:0;height:105px"></div>
<svg class="ic" style="left:71.2px;top:30.0px;width:44.5px;height:44.5px" viewBox="0 0 24 24" fill="#055a88"><path d="M19 3H5c-1.100 0-2 .900-2 2v14c0 1.100.900 2 2 2h14c1.100 0 2-.900 2-2V5c0-1.100-.900-2-2-2zm-2 10H7v-2h10v2z"/></svg>
<div class="pc" style="top:105px;height:97px"></div>
<svg class="ic" style="left:71.2px;top:130.2px;width:44.5px;height:44.5px" viewBox="0 0 24 24" fill="#6b6b6b"><path d="M19 5v14H5V5h14m0-2H5c-1.100 0-2 .900-2 2v14c0 1.100.900 2 2 2h14c1.100 0 2-.900 2-2V5c0-1.100-.900-2-2-2z"/></svg>
<div class="pc sel" style="top:202px;height:98px"></div>
<svg class="ic" style="left:71.2px;top:227.8px;width:44.5px;height:44.5px" viewBox="0 0 24 24" fill="#055a88"><path d="M19 3H5c-1.110 0-2 .900-2 2v14c0 1.100.890 2 2 2h14c1.110 0 2-.900 2-2V5c0-1.100-.890-2-2-2zm-9 14l-5-5 1.410-1.410L10 14.170l7.590-7.590L19 8l-9 9z"/></svg>
<div class="pc" style="top:300px;height:97px"></div>
<svg class="ic" style="left:71.2px;top:325.2px;width:44.5px;height:44.5px" viewBox="0 0 24 24" fill="#6b6b6b"><path d="M19 5v14H5V5h14m0-2H5c-1.100 0-2 .900-2 2v14c0 1.100.900 2 2 2h14c1.100 0 2-.900 2-2V5c0-1.100-.900-2-2-2z"/></svg>
<div class="pc" style="top:397px;height:98px"></div>
<svg class="ic" style="left:71.2px;top:422.8px;width:44.5px;height:44.5px" viewBox="0 0 24 24" fill="#6b6b6b"><path d="M19 5v14H5V5h14m0-2H5c-1.100 0-2 .900-2 2v14c0 1.100.900 2 2 2h14c1.100 0 2-.900 2-2V5c0-1.100-.900-2-2-2z"/></svg>
<div class="pc sel" style="top:495px;height:97px"></div>
<svg class="ic" style="left:71.2px;top:520.2px;width:44.5px;height:44.5px" viewBox="0 0 24 24" fill="#055a88"><path d="M19 3H5c-1.110 0-2 .900-2 2v14c0 1.100.890 2 2 2h14c1.110 0 2-.900 2-2V5c0-1.100-.890-2-2-2zm-9 14l-5-5 1.410-1.410L10 14.170l7.590-7.590L19 8l-9 9z"/></svg>
<div class="pc" style="top:592px;height:98px"></div>
<svg class="ic" style="left:71.2px;top:617.8px;width:44.5px;height:44.5px" viewBox="0 0 24 24" fill="#6b6b6b"><path d="M19 5v14H5V5h14m0-2H5c-1.100 0-2 .900-2 2v14c0 1.100.900 2 2 2h14c1.100 0 2-.900 2-2V5c0-1.100-.900-2-2-2z"/></svg>
<div class="pc" style="top:690px;height:97px"></div>
<svg class="ic" style="left:71.2px;top:715.2px;width:44.5px;height:44.5px" viewBox="0 0 24 24" fill="#6b6b6b"><path d="M19 5v14H5V5h14m0-2H5c-1.100 0-2 .900-2 2v14c0 1.100.900 2 2 2h14c1.100 0 2-.900 2-2V5c0-1.100-.900-2-2-2z"/></svg>
<div class="pc" style="top:787px;height:98px"></div>
<svg class="ic" style="left:71.2px;top:812.8px;width:44.5px;height:44.5px" viewBox="0 0 24 24" fill="#6b6b6b"><path d="M19 5v14H5V5h14m0-2H5c-1.100 0-2 .900-2 2v14c0 1.100.900 2 2 2h14c1.100 0 2-.900 2-2V5c0-1.100-.900-2-2-2z"/></svg>
<div class="pc sel" style="top:885px;height:97px"></div>
<svg class="ic" style="left:71.2px;top:910.2px;width:44.5px;height:44.5px" viewBox="0 0 24 24" fill="#055a88"><path d="M19 3H5c-1.110 0-2 .900-2 2v14c0 1.100.890 2 2 2h14c1.110 0 2-.900 2-2V5c0-1.100-.890-2-2-2zm-9 14l-5-5 1.410-1.410L10 14.170l7.590-7.590L19 8l-9 9z"/></svg>
<div class="pc" style="top:982px;height:98px;border-bottom-color:transparent"></div>
<svg class="ic" style="left:71.2px;top:1007.8px;width:44.5px;height:44.5px" viewBox="0 0 24 24" fill="#6b6b6b"><path d="M19 5v14H5V5h14m0-2H5c-1.100 0-2 .900-2 2v14c0 1.100.900 2 2 2h14c1.100 0 2-.900 2-2V5c0-1.100-.900-2-2-2z"/></svg>
<div class="abs" style="left:0;top:884px;width:189px;height:98px;border:1px solid #6f9cb8"></div>
</div>
<div class="pinR" style="left:3058px;width:170px;height:105px;border-bottom:1px solid #e0e0e0;clip-path:inset(0 0 0 -14px)"><div class="t m" style="left:27.50px;top:0px;font-size:26.25px;letter-spacing:1.207px;color:#1c1c1c;line-height:105px;">Actions</div></div>
<div class="pinR" style="left:3073px;top:105px;width:160px;height:975.0px">
<div class="pc" style="top:0px;height:97px"></div>
<svg class="ic" style="left:61.5px;top:34.5px;width:27px;height:27px" viewBox="0 0 24 24" fill="#6b6b6b"><path d="M12 8c1.1 0 2-.9 2-2s-.9-2-2-2-2 .9-2 2 .9 2 2 2zm0 2c-1.1 0-2 .9-2 2s.9 2 2 2 2-.9 2-2-.9-2-2-2zm0 6c-1.1 0-2 .9-2 2s.9 2 2 2 2-.9 2-2-.9-2-2-2z"/></svg>
<div class="pc sel" style="top:97px;height:98px"></div>
<svg class="ic" style="left:61.5px;top:131.5px;width:27px;height:27px" viewBox="0 0 24 24" fill="#6b6b6b"><path d="M12 8c1.1 0 2-.9 2-2s-.9-2-2-2-2 .9-2 2 .9 2 2 2zm0 2c-1.1 0-2 .9-2 2s.9 2 2 2 2-.9 2-2-.9-2-2-2zm0 6c-1.1 0-2 .9-2 2s.9 2 2 2 2-.9 2-2-.9-2-2-2z"/></svg>
<div class="pc" style="top:195px;height:97px"></div>
<svg class="ic" style="left:61.5px;top:229.5px;width:27px;height:27px" viewBox="0 0 24 24" fill="#6b6b6b"><path d="M12 8c1.1 0 2-.9 2-2s-.9-2-2-2-2 .9-2 2 .9 2 2 2zm0 2c-1.1 0-2 .9-2 2s.9 2 2 2 2-.9 2-2-.9-2-2-2zm0 6c-1.1 0-2 .9-2 2s.9 2 2 2 2-.9 2-2-.9-2-2-2z"/></svg>
<div class="pc" style="top:292px;height:98px"></div>
<svg class="ic" style="left:61.5px;top:326.5px;width:27px;height:27px" viewBox="0 0 24 24" fill="#6b6b6b"><path d="M12 8c1.1 0 2-.9 2-2s-.9-2-2-2-2 .9-2 2 .9 2 2 2zm0 2c-1.1 0-2 .9-2 2s.9 2 2 2 2-.9 2-2-.9-2-2-2zm0 6c-1.1 0-2 .9-2 2s.9 2 2 2 2-.9 2-2-.9-2-2-2z"/></svg>
<div class="pc sel" style="top:390px;height:97px"></div>
<svg class="ic" style="left:61.5px;top:424.5px;width:27px;height:27px" viewBox="0 0 24 24" fill="#6b6b6b"><path d="M12 8c1.1 0 2-.9 2-2s-.9-2-2-2-2 .9-2 2 .9 2 2 2zm0 2c-1.1 0-2 .9-2 2s.9 2 2 2 2-.9 2-2-.9-2-2-2zm0 6c-1.1 0-2 .9-2 2s.9 2 2 2 2-.9 2-2-.9-2-2-2z"/></svg>
<div class="pc" style="top:487px;height:98px"></div>
<svg class="ic" style="left:61.5px;top:521.5px;width:27px;height:27px" viewBox="0 0 24 24" fill="#6b6b6b"><path d="M12 8c1.1 0 2-.9 2-2s-.9-2-2-2-2 .9-2 2 .9 2 2 2zm0 2c-1.1 0-2 .9-2 2s.9 2 2 2 2-.9 2-2-.9-2-2-2zm0 6c-1.1 0-2 .9-2 2s.9 2 2 2 2-.9 2-2-.9-2-2-2z"/></svg>
<div class="pc" style="top:585px;height:97px"></div>
<svg class="ic" style="left:61.5px;top:619.5px;width:27px;height:27px" viewBox="0 0 24 24" fill="#6b6b6b"><path d="M12 8c1.1 0 2-.9 2-2s-.9-2-2-2-2 .9-2 2 .9 2 2 2zm0 2c-1.1 0-2 .9-2 2s.9 2 2 2 2-.9 2-2-.9-2-2-2zm0 6c-1.1 0-2 .9-2 2s.9 2 2 2 2-.9 2-2-.9-2-2-2z"/></svg>
<div class="pc" style="top:682px;height:98px"></div>
<svg class="ic" style="left:61.5px;top:716.5px;width:27px;height:27px" viewBox="0 0 24 24" fill="#6b6b6b"><path d="M12 8c1.1 0 2-.9 2-2s-.9-2-2-2-2 .9-2 2 .9 2 2 2zm0 2c-1.1 0-2 .9-2 2s.9 2 2 2 2-.9 2-2-.9-2-2-2zm0 6c-1.1 0-2 .9-2 2s.9 2 2 2 2-.9 2-2-.9-2-2-2z"/></svg>
<div class="pc sel" style="top:780px;height:97px"></div>
<svg class="ic" style="left:61.5px;top:814.5px;width:27px;height:27px" viewBox="0 0 24 24" fill="#6b6b6b"><path d="M12 8c1.1 0 2-.9 2-2s-.9-2-2-2-2 .9-2 2 .9 2 2 2zm0 2c-1.1 0-2 .9-2 2s.9 2 2 2 2-.9 2-2-.9-2-2-2zm0 6c-1.1 0-2 .9-2 2s.9 2 2 2 2-.9 2-2-.9-2-2-2z"/></svg>
<div class="pc" style="top:877px;height:98px;border-bottom-color:transparent"></div>
<svg class="ic" style="left:61.5px;top:911.5px;width:27px;height:27px" viewBox="0 0 24 24" fill="#6b6b6b"><path d="M12 8c1.1 0 2-.9 2-2s-.9-2-2-2-2 .9-2 2 .9 2 2 2zm0 2c-1.1 0-2 .9-2 2s.9 2 2 2 2-.9 2-2-.9-2-2-2zm0 6c-1.1 0-2 .9-2 2s.9 2 2 2 2-.9 2-2-.9-2-2-2z"/></svg>
</div>
<div class="abs" style="left:0;top:1160px;width:3225px;height:16px;background:#d3d3d3"></div>
<div class="abs" style="left:0;top:1160px;width:813.5px;height:16px;background:#808080;border-radius:0 8px 8px 0"></div>
</div>
<div class="t" style="left:61.00px;top:1374px;font-size:26.25px;letter-spacing:1.087px;color:#1c1c1c;">3 rows selected</div>
<div class="t" style="left:2415.00px;top:1374px;font-size:26.25px;letter-spacing:0.611px;color:#1c1c1c;">Rows per page:</div>
<div class="t" style="left:2638.50px;top:1373px;font-size:26.25px;letter-spacing:2.401px;color:#1c1c1c;">10</div>
<svg class="ic" style="left:2670.5px;top:1365.5px;width:45px;height:45px" viewBox="0 0 24 24" fill="#6b6b6b"><path d="M7 10l5 5 5-5z"/></svg>
<div class="t" style="left:2777.00px;top:1374px;font-size:26.25px;letter-spacing:1.392px;color:#1c1c1c;">1–10 of 17</div>
<svg class="ic" style="left:2965.5px;top:1364.5px;width:45px;height:45px" viewBox="0 0 24 24" fill="#bdbdbd"><path d="M18.41 16.59L13.82 12l4.59-4.59L17 6l-6 6 6 6zM6 6h2v12H6z"/></svg>
<svg class="ic" style="left:3040.5px;top:1364.5px;width:45px;height:45px" viewBox="0 0 24 24" fill="#bdbdbd"><path d="M15.41 7.41L14 6l-6 6 6 6 1.41-1.41L10.83 12z"/></svg>
<svg class="ic" style="left:3115.5px;top:1364.5px;width:45px;height:45px" viewBox="0 0 24 24" fill="#6b6b6b"><path d="M10 6L8.59 7.41 13.17 12l-4.58 4.59L10 18l6-6z"/></svg>
<svg class="ic" style="left:3190.5px;top:1364.5px;width:45px;height:45px" viewBox="0 0 24 24" fill="#6b6b6b"><path d="M5.59 7.41L10.18 12l-4.59 4.59L7 18l6-6-6-6zM16 6h2v12h-2z"/></svg>
</div>
</body></html>
